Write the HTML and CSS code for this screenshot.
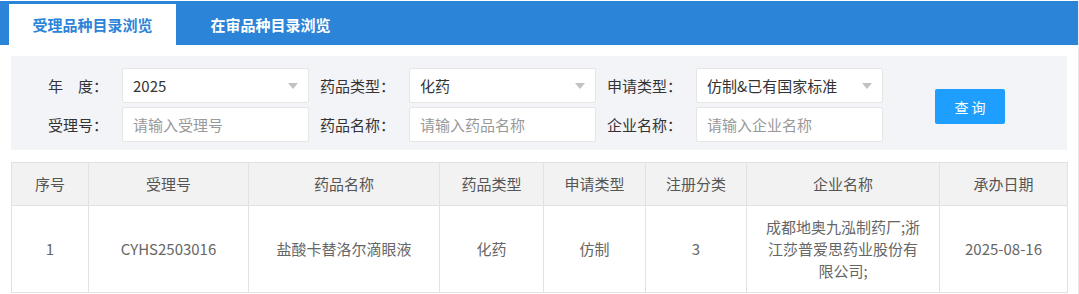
FILE: index.html
```html
<!DOCTYPE html>
<html lang="zh-CN">
<head>
    <meta charset="UTF-8">
    <title>受理品种目录浏览</title>
    <link rel="stylesheet" href="styles.css">
</head>
<body>
<div class="page">
    <div class="tab-bar">
        <div class="tab active">受理品种目录浏览</div>
        <div class="tab">在审品种目录浏览</div>
    </div>

    <form class="search-panel">
        <div class="fields">
            <div class="field-row">
                <div class="field">
                    <label>年&emsp;度：</label>
                    <div class="box select"><span>2025</span><i class="arrow"></i></div>
                </div>
                <div class="field">
                    <label>药品类型：</label>
                    <div class="box select"><span>化药</span><i class="arrow"></i></div>
                </div>
                <div class="field">
                    <label>申请类型：</label>
                    <div class="box select"><span>仿制&amp;已有国家标准</span><i class="arrow"></i></div>
                </div>
            </div>
            <div class="field-row">
                <div class="field">
                    <label>受理号：</label>
                    <input class="box" type="text" placeholder="请输入受理号">
                </div>
                <div class="field">
                    <label>药品名称：</label>
                    <input class="box" type="text" placeholder="请输入药品名称">
                </div>
                <div class="field">
                    <label>企业名称：</label>
                    <input class="box" type="text" placeholder="请输入企业名称">
                </div>
            </div>
        </div>
        <button type="button" class="btn-search">查 询</button>
    </form>

    <table class="result-table">
        <colgroup>
            <col style="width:77px">
            <col style="width:160px">
            <col style="width:191px">
            <col style="width:104px">
            <col style="width:102px">
            <col style="width:101px">
            <col style="width:193px">
            <col style="width:128px">
        </colgroup>
        <thead>
            <tr>
                <th>序号</th>
                <th>受理号</th>
                <th>药品名称</th>
                <th>药品类型</th>
                <th>申请类型</th>
                <th>注册分类</th>
                <th>企业名称</th>
                <th>承办日期</th>
            </tr>
        </thead>
        <tbody>
            <tr>
                <td>1</td>
                <td>CYHS2503016</td>
                <td>盐酸卡替洛尔滴眼液</td>
                <td>化药</td>
                <td>仿制</td>
                <td>3</td>
                <td>成都地奥九泓制药厂;浙江莎普爱思药业股份有限公司;</td>
                <td>2025-08-16</td>
            </tr>
        </tbody>
    </table>
</div>
</body>
</html>
```

FILE: styles.css
```css
body {
    margin: 0;
    font-family: "Microsoft YaHei", "Noto Sans CJK SC", sans-serif;
    font-size: 15px;
    color: #333;
    background: #fff;
}

.page {
    width: 1078px;
    min-height: 100vh;
    border-right: 1px solid #e8e8e8;
    padding-top: 1px;
}

.tab-bar {
    display: flex;
    align-items: flex-end;
    gap: 11px;
    height: 44px;
    padding-left: 9px;
    background-color: #2b84d7;
}

.tab {
    width: 167px;
    height: 41px;
    line-height: 41px;
    text-align: center;
    color: #fff;
    font-weight: bold;
}

.tab.active {
    background-color: #fff;
    color: #2b84d7;
}

.search-panel {
    display: flex;
    margin: 11px 11px 0;
    padding: 12px 0 8px 11px;
    background-color: #f3f4f8;
}

.fields {
    display: flex;
    flex-direction: column;
    gap: 4px;
}

.field-row {
    display: flex;
}

.field {
    display: flex;
    align-items: center;
}

.field label {
    width: 97px;
    padding-right: 14px;
    text-align: right;
    box-sizing: border-box;
    margin-left: 3px;
}

.box {
    display: flex;
    align-items: center;
    width: 187px;
    height: 35px;
    box-sizing: border-box;
    padding: 0 10px;
    border: 1px solid #e6e6e6;
    border-radius: 2px;
    background: #fff;
    font: inherit;
    color: #333;
    outline: none;
}

.box::placeholder {
    color: #999;
}

.select span {
    flex: 1;
    white-space: nowrap;
}

.arrow {
    width: 0;
    height: 0;
    border-top: 6px solid #c2c2c2;
    border-left: 5px solid transparent;
    border-right: 5px solid transparent;
}

.btn-search {
    align-self: center;
    margin: 3px 0 0 52px;
    width: 70px;
    height: 35px;
    border: none;
    border-radius: 2px;
    background-color: #1e9fff;
    color: #fff;
    font-family: inherit;
    font-size: 14px;
    cursor: pointer;
}

.result-table {
    margin: 12px 0 0 11px;
    width: 1056px;
    border-collapse: collapse;
    table-layout: fixed;
}

.result-table th,
.result-table td {
    border: 1px solid #e2e2e2;
    text-align: center;
    padding: 0 15px;
    font-weight: normal;
    line-height: 22px;
}

.result-table th {
    height: 42px;
    background-color: #f2f2f2;
    color: #555;
}

.result-table td {
    height: 86px;
    color: #666;
}
```
